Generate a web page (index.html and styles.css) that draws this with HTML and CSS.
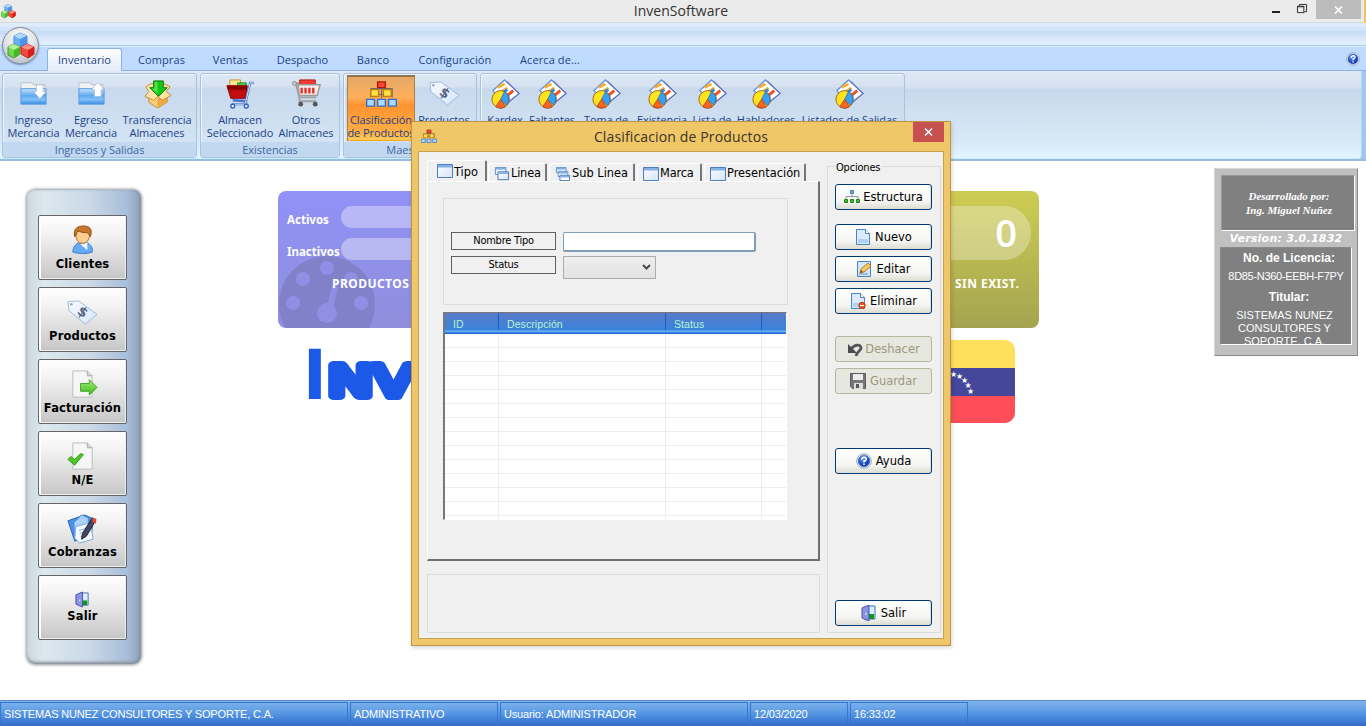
FILE: index.html
```html
<!DOCTYPE html>
<html lang="es">
<head>
<meta charset="utf-8">
<title>InvenSoftware</title>
<link rel="stylesheet" href="styles.css">
</head>
<body>
<svg class="defs" width="0" height="0" aria-hidden="true">
  <defs>
    <linearGradient id="folder" x1="0" y1="0" x2="0" y2="1"><stop offset="0" stop-color="#c5e3fb"/><stop offset=".45" stop-color="#5faaf0"/><stop offset=".7" stop-color="#80c0f8"/><stop offset="1" stop-color="#3b8ce4"/></linearGradient>
    <linearGradient id="win" x1="0" y1="0" x2="1" y2="1"><stop offset="0" stop-color="#fff"/><stop offset="1" stop-color="#d3e3fa"/></linearGradient>
    <linearGradient id="arrow" x1="0" y1="0" x2="0" y2="1"><stop offset="0" stop-color="#a4ee78"/><stop offset="1" stop-color="#3db51f"/></linearGradient>
    <linearGradient id="tag" x1="0" y1="0" x2="1" y2="1"><stop offset="0" stop-color="#f8fbff"/><stop offset="1" stop-color="#d5e5f7"/></linearGradient>
    <radialGradient id="help" cx=".4" cy=".3"><stop offset="0" stop-color="#6fa4f2"/><stop offset="1" stop-color="#1846b4"/></radialGradient>
    <symbol id="i-cubes" viewBox="0 0 28 28">
      <path d="M7 4l6-3 7 3v8l-7 4-6-4z" fill="#6ab0f5" stroke="#3f87d8"/><path d="M7 4l6 3 7-3-7-3z" fill="#b5daff"/><path d="M13 7v9l7-4V4z" fill="#4b94e6"/>
      <path d="M1 15l6-3 6 3v7l-6 4-6-3z" fill="#6ed84b" stroke="#3a9a28"/><path d="M1 15l6 3 6-3-6-3z" fill="#b2f29a"/><path d="M7 18v8l6-4v-7z" fill="#48b52d"/>
      <path d="M14 15l6-3 7 3v7l-6 4-7-4z" fill="#f34a3f" stroke="#bd1f1f"/><path d="M14 15l7 3 6-3-7-3z" fill="#ff9187"/><path d="M21 18v8l6-4v-7z" fill="#d3201d"/>
    </symbol>
    <symbol id="i-in" viewBox="0 0 32 32"><path d="M3 8V5h12l1 2h12v5H3z" fill="#f1f2f4" stroke="#b9bec6"/><path d="M3 11h26v16H3z" fill="url(#folder)" stroke="#5a9be0"/><path d="M19 7h7v7h3l-6.500 7.500L16 14h3z" fill="#fff" stroke="#a9b6c6" stroke-width=".8"/></symbol>
    <symbol id="i-out" viewBox="0 0 32 32"><path d="M3 8V5h12l1 2h12v5H3z" fill="#f1f2f4" stroke="#b9bec6"/><path d="M3 11h26v16H3z" fill="url(#folder)" stroke="#5a9be0"/><path d="M19 19h7v-7h3l-6.500-7.500L16 12h3z" fill="#fff" stroke="#a9b6c6" stroke-width=".8"/></symbol>
    <symbol id="i-box" viewBox="0 0 32 32"><path d="M7 17v8l9 6 10-6v-8z" fill="#fbd07a" stroke="#c98b2c"/><path d="M16 21v10l10-6v-9z" fill="#eaa944"/><path d="M7 14l-4 5 9 4 4-4 5 4 9-5-5-4 4-5-6-3H9l-5 3z" fill="#ffe2a5" stroke="#c98b2c"/><path d="M12 3h10v7h4L17 19l-9-9h4z" fill="#16c616" stroke="#067c0a"/><path d="M13 4h3v12l-6-5h3z" fill="#50e350"/></symbol>
    <symbol id="i-cart" viewBox="0 0 32 32"><path d="M5 2h11v7H5z" fill="#ffe690" stroke="#c99520"/><path d="M13 5h9v5h-9z" fill="#4bcb47" stroke="#258f27"/><path d="M2 8h21l-2 13H6z" fill="#c40d0d" stroke="#8c0404"/><path d="M2 8h21v4H3z" fill="#8a0000"/><path d="M30 5h-4l-5 21M7 27h16M8 23l15 1" fill="none" stroke="#4a73c9" stroke-width="2.400"/><path d="M30 5h-4l-5 21M7 27h16" fill="none" stroke="#d7e6ff"/><circle cx="8" cy="29" r="2" fill="#fff" stroke="#3162bb" stroke-width="1.500"/><circle cx="22" cy="29" r="2" fill="#fff" stroke="#3162bb" stroke-width="1.500"/></symbol>
    <symbol id="i-cart2" viewBox="0 0 32 32"><path d="M9 2h16v6H9z" fill="#f23a35" stroke="#ba1212"/><path d="M5 7h25l-3 11H8z" fill="#f7efef" stroke="#9b9b9b" stroke-width="1.500"/><path d="M11 10v6M15 10v6M19 10v6M23 10v6" stroke="#e73424" stroke-width="2.500"/><path d="M3 5h4l2 19h17M8 20h18" fill="none" stroke="#a1a1a1" stroke-width="2"/><circle cx="3.500" cy="5.500" r="2" fill="#ccc" stroke="#888"/><circle cx="10" cy="27" r="2.500" fill="#555"/><circle cx="25" cy="27" r="2.500" fill="#555"/></symbol>
    <symbol id="i-tree" viewBox="0 0 32 32"><path d="M16 9v6M5 20v-9h22v9M16 14v7M5 17h22" fill="none" stroke="#6b6b74" stroke-width="1.200"/><path d="M12 4h8v6h-8z" fill="#f54931" stroke="#af1609" stroke-width="1.400"/><path d="M5 12h8v7H5zM18 12h8v7h-8z" fill="#ffe043" stroke="#bd7e09" stroke-width="1.400"/><path d="M.7 22h8v7h-8zM12 22h8v7h-8zM23.300 22h8v7h-8z" fill="#aadbff" stroke="#2c6fd0" stroke-width="1.400"/></symbol>
    <symbol id="i-tag" viewBox="0 0 32 32"><path d="M1 5l11-1 19 14-12 10L2 14z" fill="url(#tag)" stroke="#9cb9dc"/><circle cx="4.500" cy="7.500" r="1.300" fill="#8daacb"/><text class="tag-sign" x="11.500" y="20" transform="rotate(35 16 15)">$</text></symbol>
    <symbol id="i-report" viewBox="0 0 32 32"><path d="M15 2l15 14-14 11L3 13z" fill="#fff" stroke="#628fd2" stroke-width="1.300"/><path d="M17 3l13 13-14 12" fill="none" stroke="#655db2"/><path d="M8 10l7-4M12 14l6-4" stroke="#ffad24" stroke-width="2.600"/><path d="M13 15l5-3" stroke="#298ced" stroke-width="3"/><path d="M18 18l6-5" stroke="#f14c1d" stroke-width="3"/><circle cx="11" cy="22" r="9" fill="#ffe31c" stroke="#a56613"/><path d="M11 22l4-8a9 9 0 0 1 2 14z" fill="#37a2f4" stroke="#2667b2" stroke-width=".8"/><path d="M11 22l5 7.500a9 9 0 0 1-10 0z" fill="#fa6428" stroke="#a3451a" stroke-width=".8"/></symbol>
    <symbol id="i-user" viewBox="0 0 32 32"><path d="M6 28c0-5 3-9 7-10h7c5 2 7 6 6 10-5 2-14 2-20 0z" fill="#67aaf0" stroke="#3b7dd0"/><path d="M14 20l7 6v-8z" fill="#edf6ff"/><path d="M9 8q0 11 7 11t8-11l-4-4h-7z" fill="#ffcf91" stroke="#b57125"/><path d="M8 12C6 4 11 1 17 1s10 3 7 11c-2-3-2-4-3-4-5 0-8-1-10-2-1 2-1 4-3 6z" fill="#c4762c" stroke="#8f4a12"/></symbol>
    <symbol id="i-sheet" viewBox="0 0 32 32"><path d="M6 2h15l5 5v22H6z" fill="#f6f6f6" stroke="#bcbcbc"/><path d="M21 2v5h5" fill="#d5d5d5" stroke="#aaa"/></symbol>
    <symbol id="i-invoice" viewBox="0 0 32 32"><use href="#i-sheet"/><path d="M14 15h9v-4l8 8-8 8v-4h-9z" fill="url(#arrow)" stroke="#3fa627"/></symbol>
    <symbol id="i-check" viewBox="0 0 32 32"><use href="#i-sheet"/><path d="M1 19l3-3 4 3 6-6 3 1-9 11z" fill="#4cc727" stroke="#3c9a22"/></symbol>
    <symbol id="i-notes" viewBox="0 0 32 32"><path d="M1 8l17-6 9 4-2 18-17 5z" fill="#4a92e8" stroke="#2265bd"/><path d="M7 10l8-8 7 3v17l-14 5z" fill="#acd2fb" stroke="#478bd5"/><path d="M9 14l15-4 3 17-14 4-5-5z" fill="#f3f9ff" stroke="#7ba9dc"/><path d="M12 18l8-2M13 21l8-2M14 24l5-1" stroke="#8db4df"/><path d="M26 5l4 2-10 17-5 3 1-6z" fill="#44465f" stroke="#23233a"/><path d="M26 5l4 1v5l-4-2z" fill="#da4835"/></symbol>
    <symbol id="i-door" viewBox="0 0 16 16"><path d="M6 1h8v13H6z" fill="#d7efff" stroke="#4971b7"/><path d="M8 9h5v5H8z" fill="#0a9a1a"/><path d="M1 3l7-3v16l-7-3z" fill="#8b92e8" stroke="#4c50a4"/><path d="M5 8v2" stroke="#fff"/></symbol>
    <symbol id="i-window" viewBox="0 0 16 14"><path d="M.5.5h15v13H.5z" fill="url(#win)" stroke="#4c7cc0"/><path d="M1 1h14v2.500H1z" fill="#84b0e8"/></symbol>
    <symbol id="i-windows2" viewBox="0 0 16 16"><path d="M.5.5h12v8H.5z" fill="#edf5ff" stroke="#5686c6"/><path d="M1 1h11v2H1z" fill="#82afe6"/><path d="M3.500 5.500h12v9h-12z" fill="url(#win)" stroke="#3c6cae"/><path d="M4 6h11v2H4z" fill="#82afe6"/></symbol>
    <symbol id="i-windows3" viewBox="0 0 16 16"><path d="M.5.5h11v6H.5z" fill="#edf5ff" stroke="#5686c6"/><path d="M1 1h10v2H1z" fill="#82afe6"/><path d="M2.500 5h11v6h-11z" fill="#edf5ff" stroke="#5686c6"/><path d="M3 5.500h10v2H3z" fill="#82afe6"/><path d="M4.500 9.500h11v6h-11z" fill="#fff" stroke="#3c6cae"/><path d="M5 10h10v2H5z" fill="#82afe6"/></symbol>
    <symbol id="i-struct" viewBox="0 0 16 16"><path d="M8 4v4M2 10V7.500h12V10" fill="none" stroke="#8f98a5"/><path d="M6.500 1.500h3v3h-3z" fill="#69aeef" stroke="#4778bb"/><path d="M.5 10.500h3v3h-3zM6.500 10.500h3v3h-3zM12.500 10.500h3v3h-3z" fill="#44bc2b" stroke="#23831b"/></symbol>
    <symbol id="i-doc" viewBox="0 0 16 16"><path d="M1.500.5h9l4 4v11h-13z" fill="#d9ecff" stroke="#4e81be"/><path d="M10.500.5v4h4" fill="#fff" stroke="#4e81be"/><path d="M3 11h10M3 13h10" stroke="#83b8ed"/></symbol>
    <symbol id="i-edit" viewBox="0 0 16 16"><path d="M1.500.5h13v15h-13z" fill="#d2e7fd" stroke="#4e81be"/><path d="M3 13h9" stroke="#5894d4"/><path d="M4 12l1-4 7-6 3 3-7 6z" fill="#f8c65f" stroke="#b57b23"/><path d="M4 12l1-3 2 2z" fill="#78501d"/></symbol>
    <symbol id="i-delete" viewBox="0 0 16 16"><use href="#i-doc"/><circle cx="12" cy="12.500" r="3.200" fill="#e65b20" stroke="#b63e11"/><path d="M10 12.500h4" stroke="#fff"/></symbol>
    <symbol id="i-undo" viewBox="0 0 16 16"><path d="M4 8C8 3 14 3 14 7c0 3-4 3-5 8" fill="none" stroke="#55555c" stroke-width="2.800"/><path d="M1 3v9h9z" fill="#4a4a50"/></symbol>
    <symbol id="i-save" viewBox="0 0 16 16"><path d="M.5.5h15v15h-13l-2-2z" fill="#77777a" stroke="#5c5c5f"/><path d="M3 1h10v6H3z" fill="#ececee"/><path d="M4 10h9v6H4z" fill="#dededf"/><path d="M6 11h3v4H6z" fill="#56565a"/></symbol>
    <symbol id="i-help" viewBox="0 0 16 16"><circle cx="8" cy="8" r="7.300" fill="#f8fbff" stroke="#94a5bd"/><circle cx="8" cy="8" r="5.800" fill="url(#help)" stroke="#2857ba" stroke-width=".6"/><path d="M5.800 6.500q.2-2.300 2.400-2.200 2.700.2 1.900 2.400Q9.700 7.700 8 8.300v1.200M8 10.500v1.500" fill="none" stroke="#fff" stroke-width="1.600"/></symbol>
  </defs>
</svg>

<header class="titlebar">
  <svg class="app-icon"><use href="#i-cubes"/></svg>
  <span class="title">InvenSoftware</span>
  <div class="controls">
    <span class="min"></span>
    <svg class="restore" viewBox="0 0 11 11"><path d="M.5 2.500h7v7h-7zM2.500 2V.5h8v8H8" fill="none" stroke="#222"/><path d="M0 3h8" stroke="#222"/></svg>
    <span class="close"><svg width="9" height="8" viewBox="0 0 9 8"><path d="M1 .5l7 7M8 .5l-7 7" stroke="#fff" stroke-width="1.700"/></svg></span>
    <span class="edge"></span>
  </div>
</header>
<div class="quickbar"><span class="orb"><svg width="28" height="28"><use href="#i-cubes"/></svg></span></div>
<nav class="tabs">
  <span class="tab active">Inventario</span><span class="tab compras">Compras</span><span class="tab ventas">Ventas</span><span class="tab despacho">Despacho</span><span class="tab banco">Banco</span><span class="tab config">Configuración</span><span class="tab acerca">Acerca de...</span>
  <svg class="tabs-help"><use href="#i-help"/></svg>
</nav>
<section class="ribbon">
  <div class="ribbon-in">
    <div class="group">
      <div class="tools g1">
        <div class="tool"><svg><use href="#i-in"/></svg><span>Ingreso<br>Mercancia</span></div>
        <div class="tool"><svg><use href="#i-out"/></svg><span>Egreso<br>Mercancia</span></div>
        <div class="tool"><svg><use href="#i-box"/></svg><span>Transferencia<br>Almacenes</span></div>
      </div>
      <div class="caption">Ingresos y Salidas</div>
    </div>
    <div class="group">
      <div class="tools g2">
        <div class="tool"><svg><use href="#i-cart"/></svg><span>Almacen<br>Seleccionado</span></div>
        <div class="tool"><svg><use href="#i-cart2"/></svg><span>Otros<br>Almacenes</span></div>
      </div>
      <div class="caption">Existencias</div>
    </div>
    <div class="group">
      <div class="tools g3">
        <div class="tool on"><svg><use href="#i-tree"/></svg><span>Clasificación<br>de Productos</span></div>
        <div class="tool"><svg><use href="#i-tag"/></svg><span>Productos</span></div>
      </div>
      <div class="caption">Maestros</div>
    </div>
    <div class="group">
      <div class="tools g4">
        <div class="tool"><svg><use href="#i-report"/></svg><span>Kardex</span></div>
        <div class="tool"><svg><use href="#i-report"/></svg><span>Faltantes</span></div>
        <div class="tool"><svg><use href="#i-report"/></svg><span>Toma de</span></div>
        <div class="tool"><svg><use href="#i-report"/></svg><span>Existencia</span></div>
        <div class="tool"><svg><use href="#i-report"/></svg><span>Lista de</span></div>
        <div class="tool"><svg><use href="#i-report"/></svg><span>Habladores</span></div>
        <div class="tool"><svg><use href="#i-report"/></svg><span>Listados de Salidas</span></div>
      </div>
      <div class="caption"></div>
    </div>
  </div>
</section>

<main class="desk">
  <aside class="dock">
    <div class="dock-btn"><svg><use href="#i-user"/></svg>Clientes</div>
    <div class="dock-btn"><svg><use href="#i-tag"/></svg>Productos</div>
    <div class="dock-btn"><svg><use href="#i-invoice"/></svg>Facturación</div>
    <div class="dock-btn"><svg><use href="#i-check"/></svg>N/E</div>
    <div class="dock-btn"><svg><use href="#i-notes"/></svg>Cobranzas</div>
    <div class="dock-btn"><svg class="small"><use href="#i-door"/></svg>Salir</div>
  </aside>
  <section class="dashboard">
    <div class="cards">
      <div class="card products">
        <svg class="gauge" viewBox="0 0 96 72"><circle cx="48" cy="48" r="48" fill="#8181ca"/><g fill="#908fe6"><circle cx="48" cy="12" r="7"/><circle cx="24" cy="23" r="7"/><circle cx="72" cy="23" r="7"/><circle cx="14" cy="47" r="7"/><circle cx="82" cy="47" r="7"/><circle cx="48" cy="57" r="10"/><path d="M48 50l7-26 5 1-6 28z"/></g></svg>
        <div class="stat"><span>Activos</span><i></i></div>
        <div class="stat"><span>Inactivos</span><i></i></div>
        <div class="card-title">PRODUCTOS</div>
      </div>
      <div class="card stock">
        <div class="count">0</div>
        <div class="card-title">SIN EXIST.</div>
      </div>
    </div>
    <div class="brands">
      <svg class="logo" viewBox="0 0 140 64"><text class="logo-text" y="56"><tspan class="logo-i" x="-2">I</tspan><tspan class="logo-n" x="20" textLength="86" lengthAdjust="spacingAndGlyphs">NV</tspan></text></svg>
      <div class="flag"><svg viewBox="0 0 125 83"><path d="M0 0h125v28H0z" fill="#ffe05c"/><path d="M0 28h125v28H0z" fill="#45479b"/><path d="M0 56h125v27H0z" fill="#ff4e58"/><text class="stars"><tspan x="60" y="37">★</tspan><tspan x="66" y="39">★</tspan><tspan x="71" y="43">★</tspan><tspan x="74.500" y="48">★</tspan><tspan x="77" y="53.500">★</tspan></text></svg></div>
    </div>
  </section>
  <aside class="license">
    <div class="author">Desarrollado por:<br>Ing. Miguel Nuñez</div>
    <div class="version">Version: 3.0.1832</div>
    <div class="holder">
      <b class="l1">No. de Licencia:</b>
      <span class="key">8D85-N360-EEBH-F7PY</span>
      <b class="l2">Titular:</b>
      <span class="owner">SISTEMAS NUNEZ<br>CONSULTORES Y<br>SOPORTE, C.A.</span>
    </div>
  </aside>
</main>

<footer class="status">
  <span class="s1"><em>SISTEMAS NUNEZ CONSULTORES Y SOPORTE, C.A.</em></span><span class="s2"><em>ADMINISTRATIVO</em></span><span class="s3"><em>Usuario: ADMINISTRADOR</em></span><span class="s4"><em>12/03/2020</em></span><span class="s5"><em>16:33:02</em></span>
</footer>

<div class="dialog">
  <div class="dlg-title"><svg><use href="#i-tree"/></svg><span>Clasificacion de Productos</span><b class="dlg-close"><svg width="9" height="8" viewBox="0 0 9 8"><path d="M1 .5l7 7M8 .5l-7 7" stroke="#fff" stroke-width="1.500"/></svg></b></div>
  <div class="client">
    <div class="left">
      <div class="dlg-tabs">
        <div class="dt sel t1"><svg><use href="#i-window"/></svg>Tipo</div>
        <div class="dt t2"><svg><use href="#i-windows2"/></svg>Linea</div>
        <div class="dt t3"><svg><use href="#i-windows3"/></svg>Sub Linea</div>
        <div class="dt t4"><svg><use href="#i-window"/></svg>Marca</div>
        <div class="dt t5"><svg><use href="#i-window"/></svg>Presentación</div>
      </div>
      <div class="page">
        <div class="form">
          <label>Nombre Tipo</label><div class="input"></div>
          <label>Status</label><div class="select"><svg width="9" height="7" viewBox="0 0 9 7"><path d="M1 1l3.500 3.500L8 1" fill="none" stroke="#484848" stroke-width="2"/></svg></div>
        </div>
        <div class="grid">
          <div class="row head"><span>ID</span><span>Descripción</span><span>Status</span><span></span></div>
          <div class="row"><span></span><span></span><span></span><span></span></div>
          <div class="row"><span></span><span></span><span></span><span></span></div>
          <div class="row"><span></span><span></span><span></span><span></span></div>
          <div class="row"><span></span><span></span><span></span><span></span></div>
          <div class="row"><span></span><span></span><span></span><span></span></div>
          <div class="row"><span></span><span></span><span></span><span></span></div>
          <div class="row"><span></span><span></span><span></span><span></span></div>
          <div class="row"><span></span><span></span><span></span><span></span></div>
          <div class="row"><span></span><span></span><span></span><span></span></div>
          <div class="row"><span></span><span></span><span></span><span></span></div>
          <div class="row"><span></span><span></span><span></span><span></span></div>
          <div class="row"><span></span><span></span><span></span><span></span></div>
          <div class="row"><span></span><span></span><span></span><span></span></div>
          <div class="row"><span></span><span></span><span></span><span></span></div>
        </div>
      </div>
      <div class="bottom-box"></div>
    </div>
    <div class="options">
      <div class="legend">Opciones</div>
      <div class="btn b-estr"><svg><use href="#i-struct"/></svg>Estructura</div>
      <div class="btn b-nuevo"><svg><use href="#i-doc"/></svg>Nuevo</div>
      <div class="btn"><svg><use href="#i-edit"/></svg>Editar</div>
      <div class="btn"><svg><use href="#i-delete"/></svg>Eliminar</div>
      <div class="btn off b-des"><svg><use href="#i-undo"/></svg>Deshacer</div>
      <div class="btn off"><svg><use href="#i-save"/></svg>Guardar</div>
      <div class="btn b-ayuda"><svg><use href="#i-help"/></svg>Ayuda</div>
      <div class="btn b-salir"><svg><use href="#i-door"/></svg>Salir</div>
    </div>
  </div>
</div>
</body>
</html>
```
FILE: styles.css
```css
* { box-sizing: border-box; }
body { margin: 0; width: 1366px; height: 726px; overflow: hidden; position: relative; display: flex; flex-direction: column; background: #fff; font-family: "Open Sans", sans-serif; white-space: nowrap; }
.defs { position: absolute; }
svg { flex: none; overflow: visible; }

.titlebar { height: 23px; flex: none; background: #ebebeb; border-bottom: 1px solid #d9d9d9; display: grid; grid-template-columns: 113px 1fr 117px; }
.app-icon { width: 15px; height: 15px; margin: 4px 0 0 1px; }
.title { text-align: center; font-size: 14px; line-height: 22px; color: #333; letter-spacing: .05px; }
.controls { display: flex; align-items: flex-start; }
.min { width: 8px; height: 2px; background: #222; margin: 11px 0 0 23px; }
.restore { width: 10px; height: 10px; margin: 4px 0 0 17px; }
.close { width: 45px; height: 19px; background: #bcbcbc; margin-left: 9px; display: flex; align-items: center; justify-content: center; }
.edge { width: 2px; height: 23px; background: #f0c265; margin-left: auto; }

.quickbar { height: 23px; flex: none; background: linear-gradient(#dfecfa 0 3px, #d4e4f8 4px 7px, #c9ddf6 8px 11px, #d5e5f9 13px, #e0edfb 20px); border-bottom: 1px solid #a9caef; }
.orb { position: absolute; left: 2px; top: 27px; width: 37px; height: 37px; border-radius: 50%; border: 1.500px solid #7f8a99; background: radial-gradient(circle at 50% 30%, #fff, #dfe1e4 50%, #c3c7cd 75%, #f5f6f7); box-shadow: 0 1px 2px #6e8bb0; display: flex; align-items: center; justify-content: center; z-index: 2; }
.tabs { height: 25px; flex: none; background: #bfdbff; border-top: 1px solid #dfedfd; border-bottom: 1px solid #8db2e3; padding: 1px 0 0 47px; display: flex; font-size: 11px; color: #1c4285; line-height: 24px; }
.tab { text-align: center; letter-spacing: .1px; }
.tab.active { width: 75px; height: 24px; background: linear-gradient(#fdfeff, #e2ebf8); border: 1px solid #8db2e3; border-bottom: 0; border-radius: 3px 3px 0 0; line-height: 22px; }
.compras { width: 79px; } .ventas { width: 59px; } .despacho { width: 85px; } .banco { width: 56px; } .config { width: 108px; } .acerca { width: 82px; }
.tabs-help { width: 14px; height: 14px; margin: 4px 6px 0 auto; }

.ribbon { height: 90px; flex: none; background: #a9c4ec; border-bottom: 2px solid #9db9de; padding-right: 4px; }
.ribbon-in { height: 88px; padding: 2px 0 0 2px; display: flex; gap: 3px; background: linear-gradient(#dfe8f4 0, #d5e1f0 17px, #c7d8ed 18px, #d0e1f1 50%, #d8e8f7 80%, #e3f5ff); border-radius: 0 0 4px 0; border-right: 1px solid #9ce0fa; border-bottom: 1px solid #bff3ff; }
.group { height: 85px; border: 1px solid #a9c2dd; border-radius: 3px; box-shadow: inset 1px 1px #eff5fc; background: linear-gradient(#dde8f4 0, #d5e1f0 13px, #c8d9ed 14px, #d5e6f6); }
.tools { height: 68px; display: grid; }
.g1 { grid-template-columns: 61px 54px 78px; }
.g2 { grid-template-columns: 78px 54px 6px; }
.g3 { grid-template-columns: 68px 58px; padding: 1px 3px; }
.g4 { grid-template-columns: 48px 46px 62px 50px 50px 58px 109px; }
.tool { display: flex; flex-direction: column; align-items: center; font-size: 11px; line-height: 13px; color: #1c4285; text-align: center; padding-top: 4px; min-width: 0; }
.tool svg { width: 31px; height: 31px; }
.tool span { margin-top: 4px; letter-spacing: -.08px; }
.g3 .tool { padding-top: 3px; }
.g3 .tool.on { background: linear-gradient(#e3a867, #ffb05b 20px, #ff9330 28px, #ffae43 55px, #ffcb56); border: 1px solid #ffa51f; border-top: 2px solid #8f7450; border-left-color: #a88048; border-right-color: #a88048; padding-top: 1px; height: 66px; }
.caption { height: 15px; background: #c1d8f0; text-align: center; font-size: 11px; line-height: 15px; color: #4066a3; letter-spacing: -.05px; }

.desk { flex: 1; min-height: 0; display: flex; align-items: flex-start; }
.dock { margin: 28px 0 0 26px; width: 116px; height: 476px; padding: 25px 0 0 11px; border-radius: 9px; border: 1px solid #b7bdc4; background: linear-gradient(90deg, #cdd9dc, #dbe8ee 15%, #cbd9e8 55%, #a7bdd8 88%, #8ea3bd); box-shadow: 0 0 3px #8a8f95, inset 0 -3px 3px -1px #888f99, inset -3px 0 3px -1px #8794a5; display: flex; flex-direction: column; gap: 7px; }
.dock-btn { width: 89px; height: 65px; flex: none; border: 1px solid #666; border-radius: 2px; box-shadow: inset 2px 1px #fff, inset -1px -1px #eee; background: linear-gradient(#fff, #f2f2f2 30%, #c6c6c6); display: flex; flex-direction: column; align-items: center; padding-top: 9px; font: bold 11.500px/15px "DejaVu Sans", sans-serif; letter-spacing: .15px; color: #000; }
.dock-btn svg { width: 31px; height: 31px; margin-bottom: 1px; }
.dock-btn svg.small { width: 15px; height: 17px; margin: 6px 0 1px; }

.dashboard { margin: 30px 0 0 136px; width: 761px; }
.cards { display: flex; justify-content: space-between; }
.card { height: 137px; border-radius: 8px; color: #fff; font: bold 12px/14px "Noto Sans", sans-serif; }
.products { width: 190px; position: relative; background: linear-gradient(#9191f8, #8f8fdc); padding: 15px 0 0 9px; overflow: hidden; }
.gauge { position: absolute; left: 1px; top: 65px; width: 96px; height: 72px; }
.stat { position: relative; display: flex; height: 32px; }
.stat span { width: 55px; line-height: 27px; font-size: 11.500px; }
.stat i { width: 130px; height: 22px; border-radius: 11px; background: rgba(255,255,255,.36); }
.products .card-title { position: relative; margin: 7px 0 0 45px; line-height: 14px; letter-spacing: .45px; }
.stock { width: 160px; background: linear-gradient(#cdcd53, #a4a450); padding-top: 15px; }
.count { width: 152px; height: 54px; background: rgba(255,255,255,.3); border-radius: 0 27px 27px 0; text-align: right; padding-right: 14px; font: 600 38px/53px "Open Sans", sans-serif; }
.stock .card-title { margin: 17px 0 0 76px; letter-spacing: .45px; }
.brands { display: flex; justify-content: space-between; padding: 12px 24px 0 30px; }
.logo { width: 140px; height: 64px; }
.logo-text { fill: #1c59e8; stroke: #1c59e8; font-family: "DejaVu Sans", sans-serif; }
.logo-i { font-size: 60px; stroke-width: 6px; }
.logo-n { font-size: 42px; stroke-width: 8px; stroke-linejoin: round; }
.flag { width: 125px; height: 83px; border-radius: 10px; overflow: hidden; }
.flag svg { width: 125px; height: 83px; display: block; }
.stars { fill: #fff; font: 8px "DejaVu Sans", sans-serif; }

.license { margin: 7px 0 0 175px; width: 144px; height: 188px; background: #c0c0c0; border: 1px solid #d7d7d7; border-right-color: #888; border-bottom-color: #888; padding: 6px; color: #fff; text-align: center; }
.author { width: 134px; height: 56px; background: #808080; border: 1px solid #999; border-right-color: #fff; border-bottom-color: #fff; padding: 13px 0 0 2px; font: italic bold 11px/14px "Liberation Serif", serif; }
.version { height: 16px; font: italic bold 11px/15px "DejaVu Sans", sans-serif; letter-spacing: .25px; }
.holder { width: 132px; height: 98px; margin-left: -1px; background: #808080; border: 1px solid #888; border-right-color: #fff; border-bottom-color: #fff; display: flex; flex-direction: column; overflow: hidden; font: 11px/13px "Liberation Sans", sans-serif; padding-top: 4px; }
.holder b { font-size: 12px; padding-left: 6px; }
.key { margin: 5px 0 8px; letter-spacing: -.3px; }
.owner { margin-top: 5px; padding-right: 3px; }

.status { height: 26px; flex: none; background: linear-gradient(#80b5ec, #609de5 40%, #4c8ee0 60%, #3569c9); border-top: 1px solid #5b87c9; padding-top: 1px; display: flex; gap: 2px; color: #fff; font: 11px/22px "Liberation Sans", sans-serif; }
.status span { border: 1px solid #3576d0; border-bottom: 0; padding-left: 3px; }
.status em { font-style: normal; letter-spacing: -.16px; }
.s1 { width: 348px; } .s2 { width: 148px; } .s3 { width: 248px; } .s4 { width: 98px; } .s5 { width: 118px; }

.dialog { position: absolute; left: 411px; top: 121px; width: 540px; height: 525px; background: #f0c768; border: 1px solid #bb9544; padding: 0 6px 6px; display: flex; flex-direction: column; box-shadow: 1px 2px 4px rgba(0,0,0,.15); z-index: 3; }
.dlg-title { height: 29px; flex: none; display: grid; grid-template-columns: 50px 1fr 50px; color: #3a3226; font-size: 14px; line-height: 30px; text-align: center; letter-spacing: .14px; }
.dlg-title > svg { width: 16px; height: 16px; margin: 6px 0 0 3px; }
.dlg-close { width: 31px; height: 20px; background: #c75050; display: flex; align-items: center; justify-content: center; justify-self: end; }
.client { flex: 1; border: 1px solid #c4a14f; background: #f0f0f0; padding: 8px 2px 5px 8px; display: flex; gap: 7px; }
.left { width: 393px; flex: none; font: 11px/15px "DejaVu Sans", sans-serif; color: #000; }
.dlg-tabs { height: 21px; display: flex; align-items: flex-end; }
.dt { height: 18px; border-top: 1px solid #fff; border-left: 1px solid #fff; border-right: 2px solid #777; border-radius: 3px 2px 0 0; display: flex; align-items: center; padding-left: 5px; margin-right: 2px; padding-top: 2px; font-size: 11.400px; }
.dt svg { width: 16px; height: 14px; margin-right: 1px; }
.dt.sel { height: 21px; padding: 2px 0 0 9px; margin-right: 1px; }
.dt.sel svg { margin-top: -2px; }
.t1 { width: 60px; } .t2 { width: 59px; } .t3 { width: 86px; } .t4 { width: 65px; } .t5 { width: 102px; }
.t2, .t4 { letter-spacing: -.2px; }
.page { height: 380px; border: 1px solid #fff; border-right: 2px solid #707070; border-bottom: 2px solid #707070; padding: 16px 0 0 15px; }
.form { width: 345px; height: 107px; border: 1px solid #dcdcdc; padding: 33px 0 0 7px; display: grid; grid-template-columns: 105px 193px; gap: 4px 7px; grid-template-rows: 20px 22px; align-items: start; }
.form label { height: 18px; border: 1px solid #606060; text-align: center; font: 11px/16px "DejaVu Sans Condensed", "DejaVu Sans", sans-serif; letter-spacing: -.25px; }
.input { height: 20px; background: #fff; border: 1px solid #7f9db9; border-right-width: 2px; border-bottom-width: 2px; border-radius: 2px; }
.select { width: 93px; height: 23px; border: 1px solid #acacac; background: linear-gradient(#efefef, #e2e2e2); display: flex; align-items: center; justify-content: flex-end; padding-right: 4px; }
.grid { width: 344px; height: 208px; margin-top: 7px; border: 2px solid #777; border-right: 1px solid #fff; border-bottom: 1px solid #fff; border-top-width: 1px; background: #fff; overflow: hidden; }
.row { height: 14px; border-bottom: 1px solid #ececec; display: grid; grid-template-columns: 54px 167px 96px 24px; }
.row span { border-right: 1px solid #ececec; }
.row span:last-child { border-right: 0; }
.row.head { height: 21px; background: linear-gradient(#5a7ac8, #3983dc 17px, #79baff 18px, #2a74da 20px); border-bottom: 1px solid #1e69d5; font: 10.500px/22px "Liberation Sans", sans-serif; letter-spacing: .08px; color: #b4f5d1; }
.head span { border-right-color: #1c5fc3; padding-left: 8px; height: 17px; }
.bottom-box { height: 59px; margin-top: 13px; border: 1px solid #dcdcdc; }
.options { width: 114px; height: 467px; margin-top: 6px; border: 1px solid #dcdcdc; padding: 0 8px 0 7px; display: flex; flex-direction: column; font: 11.500px/15px "DejaVu Sans", sans-serif; color: #000; }
.legend { height: 16px; flex: none; margin-top: -7px; align-self: flex-start; background: #f0f0f0; padding: 0 2px 0 1px; font: 11px/15px "DejaVu Sans Condensed", sans-serif; letter-spacing: -.2px; }
.btn { height: 26px; flex: none; margin-bottom: 6px; border: 1px solid #003c74; border-radius: 3px; background: linear-gradient(#fff, #f4f4f0 70%, #dcdcd2); box-shadow: inset -1px -1px #dcdcd2; display: flex; align-items: center; justify-content: center; gap: 4px; }
.btn svg { width: 16px; height: 16px; }
.b-estr { margin: 8px 0 14px; gap: 3px; }
.b-des { margin-top: 16px; gap: 2px; }
.b-ayuda { margin-top: 48px; }
.b-salir { margin-top: auto; margin-bottom: 6px; }
.off { background: #e6e7df; border-color: #b3b79e; box-shadow: none; color: #9c987e; }
.tag-sign { font: bold 14px "DejaVu Sans", sans-serif; fill: #57628b; }
```
